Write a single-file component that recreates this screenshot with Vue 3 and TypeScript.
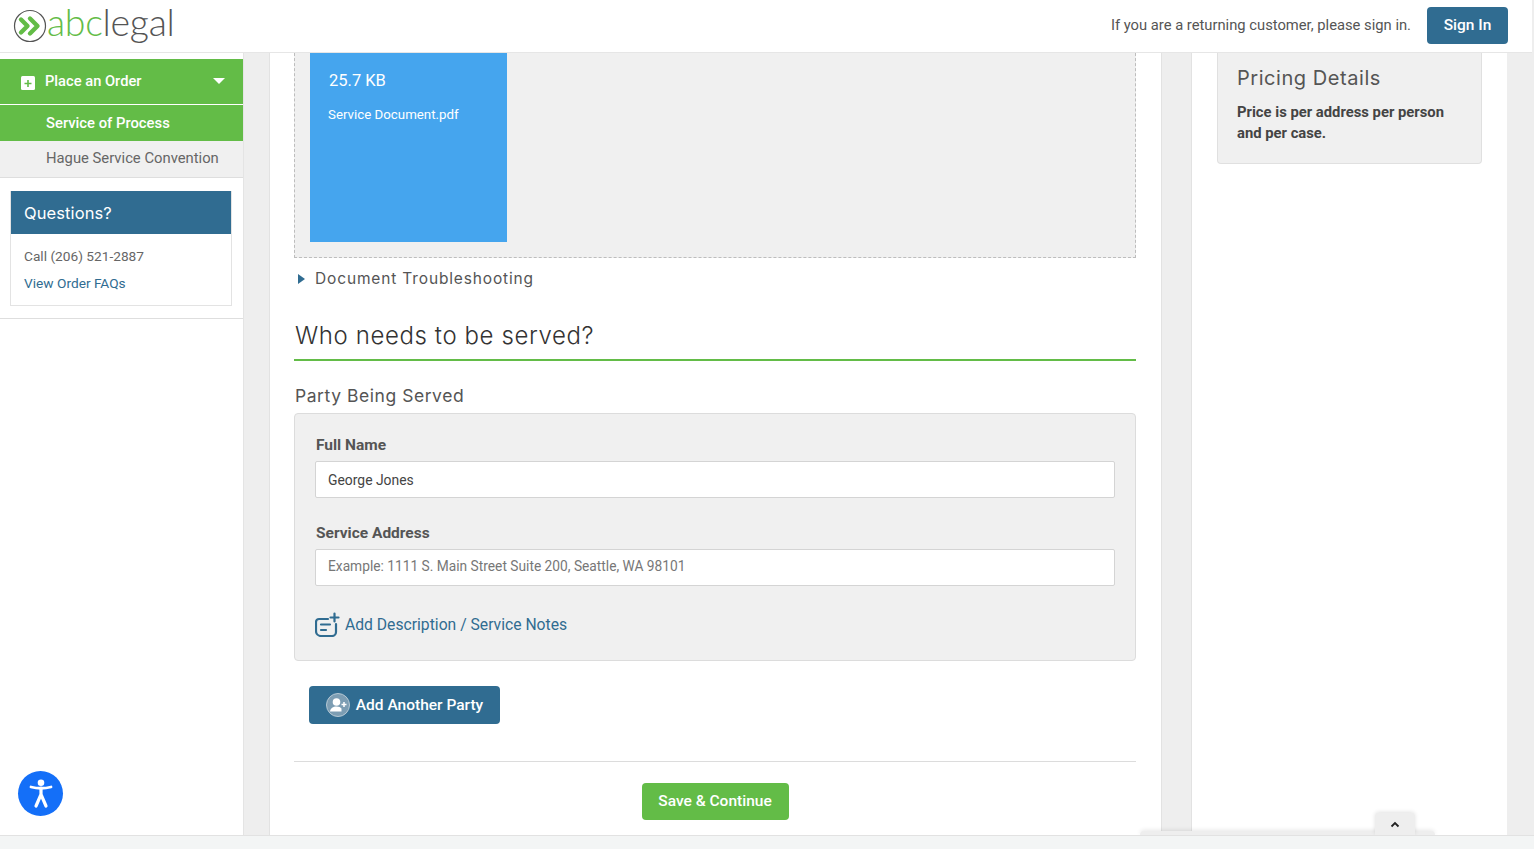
<script setup lang="ts">
const title: string = 'Who needs to be served?'
</script>

<template>
  <div class="page">
    <header class="top">
      <div class="logo">
        <svg class="logo-mark" width="34" height="34" viewBox="0 0 34 34" fill="none">
          <circle cx="17" cy="17" r="15.5" stroke="#555" stroke-width="1.2" />
          <path d="M8 10.5l6.5 6.5L8 23.5" stroke="#63bc47" stroke-width="4.4" stroke-linecap="round" stroke-linejoin="round" />
          <path d="M17 9.5l7.5 7.5-7.5 7.5" stroke="#63bc47" stroke-width="4.4" stroke-linecap="round" stroke-linejoin="round" />
        </svg>
        <span class="logo-text"><span class="abc">abc</span><span class="legal">legal</span></span>
      </div>
      <div class="top-right">
        <span class="returning">If you are a returning customer, please sign in.</span>
        <button class="btn signin">Sign In</button>
      </div>
    </header>

    <div class="body">
      <aside class="side">
        <div class="order">
          <span class="plus"><svg width="14" height="14" viewBox="0 0 14 14"><rect width="14" height="14" rx="1.5" fill="#fff" /><path d="M3.5 7.5h7M7 4v7" stroke="#63bc47" stroke-width="1.6" /></svg></span>
          <span class="order-label">Place an Order</span>
          <span class="caret"></span>
        </div>
        <div class="nav nav-on">Service of Process</div>
        <div class="nav nav-off">Hague Service Convention</div>
        <div class="q-wrap">
          <div class="q-box">
            <div class="q-head">Questions?</div>
            <div class="q-body">
              <div class="q-call">Call (206) 521-2887</div>
              <a class="q-link">View Order FAQs</a>
            </div>
          </div>
        </div>
      </aside>

      <main class="main">
        <div class="drop">
          <div class="tile">
            <div class="size">25.7 KB</div>
            <div class="fname">Service Document.pdf</div>
          </div>
        </div>
        <div class="trouble"><span class="tri"></span>Document Troubleshooting</div>
        <h2 class="h2">{{ title }}</h2>
        <h3 class="h3">Party Being Served</h3>
        <section class="party">
          <label class="label">Full Name</label>
          <div class="input val">George Jones</div>
          <label class="label second">Service Address</label>
          <div class="input ph">Example: 1111 S. Main Street Suite 200, Seattle, WA 98101</div>
          <div class="notes">
            <svg width="25" height="25" viewBox="0 0 25 25" fill="none" stroke="#306c91" stroke-width="2.200" stroke-linecap="round">
              <path d="M13 7H4a3 3 0 0 0-3 3v9a5 5 0 0 0 5 5h11a4 4 0 0 0 4-4v-8" />
              <path d="M6 12.500h9M6 18h5" />
              <path d="M19.500 1.500v8M15.500 5.500h8" />
            </svg>
            <a>Add Description / Service Notes</a>
          </div>
        </section>
        <div class="add-row">
          <button class="btn add">
            <svg width="24" height="24" viewBox="0 0 24 24">
              <circle cx="12" cy="12" r="11.500" fill="#7c9db3" stroke="#b5c8d4" />
              <circle cx="10.500" cy="9" r="3.800" fill="#fff" />
              <path d="M4 18.500c.5-3.500 3-5 6.500-5 2.500 0 4 .8 5 2v3z" fill="#fff" />
              <path d="M15.500 11.500h5M18 9v5" stroke="#fff" stroke-width="1.500" />
            </svg>
            Add Another Party
          </button>
        </div>
        <div class="save-row">
          <button class="btn save">Save &amp; Continue</button>
        </div>
      </main>

      <aside class="right">
        <div class="price">
          <div class="price-title">Pricing Details</div>
          <p class="price-text">Price is per address per person and per case.</p>
        </div>
      </aside>
    </div>

    <footer class="foot"></footer>

    <button class="a11y" aria-label="Accessibility">
      <svg width="30" height="30" viewBox="0 0 30 30" fill="none">
        <circle cx="15" cy="3.800" r="3.300" fill="#fff" />
        <path d="M5 8Q15 10.500 25 8" stroke="#fff" stroke-width="2.800" stroke-linecap="round" />
        <path d="M15 9v7M15 15.500L10 27M15 15.500L20 27" stroke="#fff" stroke-width="3.200" stroke-linecap="round" />
      </svg>
    </button>
    <div class="dock"></div>
    <div class="dock-tab">
      <svg width="10" height="7" viewBox="0 0 10 7" fill="none"><path d="M1.500 5.500L5 2l3.500 3.500" stroke="#222" stroke-width="1.800" /></svg>
    </div>
  </div>
</template>

<style>
html, body { margin: 0; padding: 0; overflow: hidden; }
</style>

<style scoped>
.page {
  position: relative;
  width: 1534px;
  height: 849px;
  overflow: hidden;
  display: flex;
  flex-direction: column;
  background: #eeeeee;
  font-family: Roboto, "Liberation Sans", sans-serif;
  color: #555;
  font-size: 14px;
}
.btn {
  border: 0;
  border-radius: 4px;
  color: #fff;
  font-family: inherit;
  font-weight: 500;
  font-size: 15.500px;
  cursor: pointer;
  padding: 0;
}

/* header */
.top {
  height: 53px;
  box-sizing: border-box;
  width: 1532px;
  flex: none;
  background: #fff;
  border-bottom: 1px solid #e6e6e6;
  display: flex;
  align-items: center;
  justify-content: space-between;
  padding: 0 24px 2px 13px;
}
.logo { display: flex; align-items: center; margin-top: 2px; }
.logo-mark { display: block; }
.logo-text {
  font-family: Lato, sans-serif;
  font-weight: 300;
  font-size: 37.500px;
  line-height: 40px;
  letter-spacing: -0.3px;
  margin-top: -8px;
}
.abc { color: #63bc47; }
.legal { color: #555; font-weight: 300; }
.top-right { display: flex; align-items: center; gap: 16px; }
.returning { font-size: 14.750px; color: #555; }
.signin { width: 81px; height: 37px; background: #306c91; }

/* columns */
.body { flex: 1; min-height: 0; display: flex; }
.side {
  width: 244px;
  flex: none;
  box-sizing: border-box;
  background: #fff;
  border-right: 1px solid #e4e4e4;
  padding-top: 6px;
}
.order {
  height: 45px;
  box-sizing: border-box;
  background: #63bc47;
  display: flex;
  align-items: center;
  padding: 0 18px 1px 21px;
  color: #fff;
  font-weight: 500;
  font-size: 14.700px;
}
.plus { display: flex; margin-right: 10px; margin-top: 3px; }
.order-label { flex: 1; }
.caret {
  width: 0;
  height: 0;
  border-left: 6px solid transparent;
  border-right: 6px solid transparent;
  border-top: 6px solid #fff;
}
.nav {
  height: 36px;
  display: flex;
  align-items: center;
  padding-left: 46px;
  font-size: 14.800px;
  box-sizing: border-box;
}
.nav-on {
  margin-top: 1px;
  background: #63bc47;
  color: #fff;
  font-weight: 500;
}
.nav-off {
  background: #f0f0f0;
  color: #666;
  border-bottom: 1px solid #dedede;
  height: 37px;
  padding-bottom: 2px;
}
.q-wrap {
  padding: 13px 11px 12px 10px;
  border-bottom: 1px solid #dedede;
}
.q-box {
  border: 1px solid #e3e3e3;
  border-top: 0;
}
.q-head {
  height: 43px;
  background: #306c91;
  color: #fff;
  font-family: Inter, sans-serif;
  font-size: 16.500px;
  letter-spacing: 0.1px;
  display: flex;
  align-items: center;
  padding: 0 0 0 13px;
  box-sizing: border-box;
}
.q-body { padding: 12px 12px 12px 13px; font-size: 13.700px; color: #666; }
.q-call { line-height: 20px; }
.q-link { display: block; line-height: 20px; margin-top: 7px; color: #306c91; }

.main {
  width: 893px;
  flex: none;
  box-sizing: border-box;
  margin-left: 25px;
  background: #fff;
  border-left: 1px solid #e2e2e2;
  border-right: 1px solid #e2e2e2;
  padding: 0 25px 0 24px;
}
.drop {
  height: 205px;
  box-sizing: border-box;
  background: #f0f0f0;
  border: 1px dashed #bdbdbd;
  border-top: 0;
  padding-left: 15px;
}
.tile {
  width: 197px;
  height: 189px;
  background: #45a5ee;
  color: #fff;
  box-sizing: border-box;
  padding: 18px 18px;
}
.size { font-size: 16.500px; line-height: 20px; margin-left: 1px; }
.fname { font-size: 13.300px; line-height: 20px; margin-top: 14px; }
.trouble {
  margin-top: 10px;
  height: 22px;
  box-sizing: border-box;
  padding-bottom: 1px;
  display: flex;
  align-items: center;
  font-family: Inter, sans-serif;
  font-size: 15.500px;
  color: #555;
  letter-spacing: 0.85px;
}
.tri {
  width: 0;
  height: 0;
  border-top: 5px solid transparent;
  border-bottom: 5px solid transparent;
  border-left: 7px solid #306c91;
  margin: 0 10px 0 4px;
}
.h2 {
  margin: 33px 0 0;
  height: 38px;
  box-sizing: border-box;
  border-bottom: 2px solid #63bc47;
  font-family: Inter, sans-serif;
  font-weight: 300;
  font-size: 24px;
  line-height: 26px;
  color: #333;
  letter-spacing: 0.6px;
  padding-left: 1px;
}
.h3 {
  margin: 23px 0 0;
  font-family: Inter, sans-serif;
  font-weight: 400;
  font-size: 17.500px;
  line-height: 24px;
  color: #555;
  letter-spacing: 0.55px;
  padding-left: 1px;
}
.party {
  margin-top: 5px;
  height: 248px;
  box-sizing: border-box;
  background: #f0f0f0;
  border: 1px solid #dcdcdc;
  border-radius: 4px;
  padding: 20px 20px 0;
}
.label {
  display: block;
  font-weight: 700;
  font-size: 15.500px;
  line-height: 22px;
  color: #555;
  padding-left: 1px;
}
.second { margin-top: 24px; }
.input {
  margin-top: 5px;
  height: 37px;
  box-sizing: border-box;
  background: #fff;
  border: 1px solid #d4d4d4;
  border-radius: 2px;
  display: flex;
  align-items: center;
  padding-left: 12px;
}
.val { color: #444; font-size: 13.900px; }
.ph { color: #777; font-size: 13.750px; padding-bottom: 3px; }
.notes {
  margin-top: 26px;
  display: flex;
  align-items: center;
  gap: 5px;
  color: #306c91;
  font-size: 15.700px;
}
.add-row { padding: 25px 0 0 15px; }
.add {
  width: 191px;
  height: 38px;
  background: #306c91;
  display: flex;
  align-items: center;
  justify-content: center;
  gap: 6px;
}
.save-row {
  margin-top: 37px;
  padding-top: 21px;
  border-top: 1px solid #dcdcdc;
  display: flex;
  justify-content: center;
}
.save { width: 147px; height: 37px; background: #63bc47; padding-bottom: 2px; }

.right {
  width: 316px;
  flex: none;
  box-sizing: border-box;
  margin-left: 29px;
  background: #fff;
  border-left: 1px solid #e2e2e2;
  padding: 0 25px;
}
.price {
  box-sizing: border-box;
  height: 111px;
  background: #f0f0f0;
  border: 1px solid #e0e0e0;
  border-top: 0;
  border-radius: 0 0 4px 4px;
  padding: 12px 19px;
}
.price-title {
  font-family: Inter, sans-serif;
  font-size: 20px;
  line-height: 26px;
  color: #555;
  letter-spacing: 0.55px;
}
.price-text {
  margin: 11px 0 0;
  font-weight: 700;
  font-size: 14.800px;
  line-height: 21px;
  color: #444;
}
.foot {
  height: 14px;
  flex: none;
  background: #f3f5f5;
  border-top: 1px solid #e2e2e2;
  box-sizing: border-box;
  z-index: 3;
}

/* overlays */
.a11y {
  position: absolute;
  left: 18px;
  top: 771px;
  width: 45px;
  height: 45px;
  border-radius: 50%;
  border: 0;
  padding: 0;
  background: #146ff8;
  display: flex;
  align-items: center;
  justify-content: center;
}
.dock {
  position: absolute;
  left: 1140px;
  top: 831px;
  width: 295px;
  height: 4px;
  background: #eeeeee;
  border-radius: 4px 4px 0 0;
  box-shadow: 0 -1px 4px rgba(0, 0, 0, 0.1);
}
.dock-tab {
  position: absolute;
  left: 1375px;
  top: 813px;
  width: 40px;
  height: 22px;
  background: #eeeeee;
  border-radius: 4px 4px 0 0;
  box-shadow: 0 -1px 4px rgba(0, 0, 0, 0.12);
  display: flex;
  justify-content: center;
  padding-top: 8px;
  box-sizing: border-box;
}
</style>
